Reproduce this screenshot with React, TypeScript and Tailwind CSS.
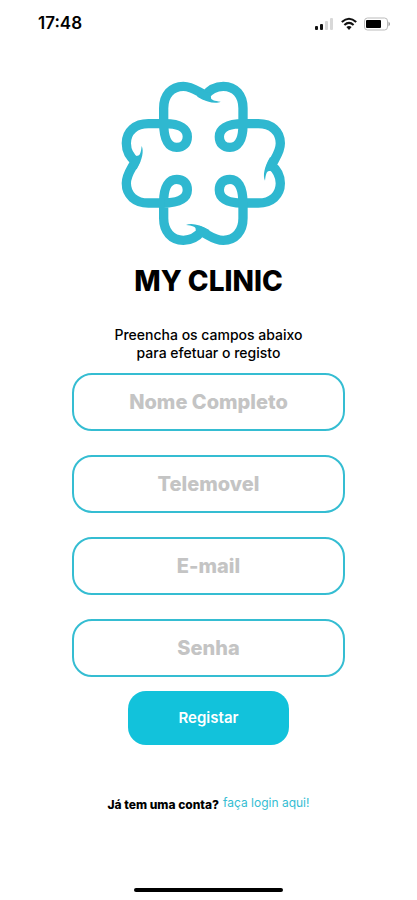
const fields = [
  { id: 'name', label: 'Nome Completo', type: 'text' },
  { id: 'phone', label: 'Telemovel', type: 'tel' },
  { id: 'email', label: 'E-mail', type: 'email' },
  { id: 'password', label: 'Senha', type: 'password' },
];

function StatusBar() {
  return (
    <div className="flex h-12 items-center justify-between pl-[38px] pr-[26px]">
      <span className="text-[17px] font-semibold">17:48</span>
      <div className="flex items-center gap-[7px]">
        {/* Signal */}
        <svg width="20" height="14" viewBox="0 0 20 14" aria-hidden="true">
          <rect x="1" y="9" width="3" height="4" rx="1" fill="#111" />
          <rect x="6" y="7" width="3" height="6" rx="1" fill="#111" />
          <rect x="11" y="4" width="3" height="9" rx="1" fill="#d8d8d8" />
          <rect x="16" y="1" width="3" height="12" rx="1" fill="#d8d8d8" />
        </svg>
        {/* Wifi */}
        <svg width="16" height="14" viewBox="0 0 16 14" fill="none" stroke="#111" strokeWidth="2.1" aria-hidden="true">
          <path d="M0.8 5Q8-1.5 15.2 5" />
          <path d="M3.4 8Q8 3.8 12.6 8" />
          <path d="M5.4 10Q8 8 10.6 10L8 13Z" fill="#111" stroke="none" />
        </svg>
        {/* Battery */}
        <svg width="27" height="14" viewBox="0 0 27 14" aria-hidden="true">
          <rect x="0.5" y="1" width="23" height="12" rx="3" fill="#fff" stroke="#bbb" />
          <rect x="2" y="3" width="15" height="8" rx="1" fill="#000" />
          <path d="M24.5 4.5Q27.5 7 24.5 9.5Z" fill="#999" />
        </svg>
      </div>
    </div>
  );
}

function Petal({ angle }: { angle: number }) {
  return (
    <g transform={`rotate(${angle} 280 280)`}>
      <path d="M161 164V115C161 76 184 49 220 49C250 49 266 68 292 78" />
      <path d="M284 78C300 57 320 49 340 49C376 49 399 76 399 115V164C399 212 382 232 360 232C340 232 328 220 328 200C328 178 348 161 402 161" />
      <path
        d="M266 57L285 66L298 67L303 81C301 90 314 93 332 95C318 102 290 97 262 80Z"
        fill="#2fb8d0"
        stroke="none"
      />
    </g>
  );
}

function Logo() {
  return (
    <svg
      className="mr-2 h-[190px] w-[190px]"
      viewBox="0 0 570 570"
      fill="none"
      stroke="#2fb8d0"
      strokeWidth="28"
      role="img"
      aria-label="My Clinic"
    >
      <Petal angle={0} />
      <Petal angle={90} />
      <Petal angle={180} />
      <Petal angle={270} />
    </svg>
  );
}

export default function App() {
  return (
    <div className="flex min-h-screen flex-col bg-white font-['Inter',sans-serif] text-black">
      <StatusBar />

      <main className="flex flex-col items-center pt-[22px]">
        <Logo />
        <h1 className="mt-[5px] text-[28px] leading-8 font-extrabold">MY CLINIC</h1>

        <p className="mt-[29px] text-center text-sm leading-[18px] font-medium">
          Preencha os campos abaixo
          <br />
          para efetuar o registo
        </p>

        <form className="mt-[11px] flex w-full flex-col items-center px-[72px]">
          <div className="flex w-full flex-col gap-6">
            {fields.map((field) => (
              <input
                key={field.id}
                id={field.id}
                type={field.type}
                placeholder={field.label}
                aria-label={field.label}
                className="h-[58px] w-full rounded-[20px] border-2 border-[#35bdd2] text-center text-xl font-extrabold placeholder:text-[#c4c4c4]"
              />
            ))}
          </div>
          <button
            type="button"
            className="mt-[14px] h-[54px] w-[161px] rounded-[18px] bg-[#12c2db] text-[15px] font-semibold text-white"
          >
            Registar
          </button>
        </form>

        <p className="mt-[50px] flex items-start gap-1 text-xs leading-4">
          <span className="pt-[2px] font-extrabold">Já tem uma conta?</span>
          <a href="#login" className="text-[#35bdd2]">
            faça login aqui!
          </a>
        </p>
      </main>

      {/* Home indicator */}
      <div className="mx-auto mt-auto mb-2 h-1 w-[149px] rounded-full bg-black" />
    </div>
  );
}
